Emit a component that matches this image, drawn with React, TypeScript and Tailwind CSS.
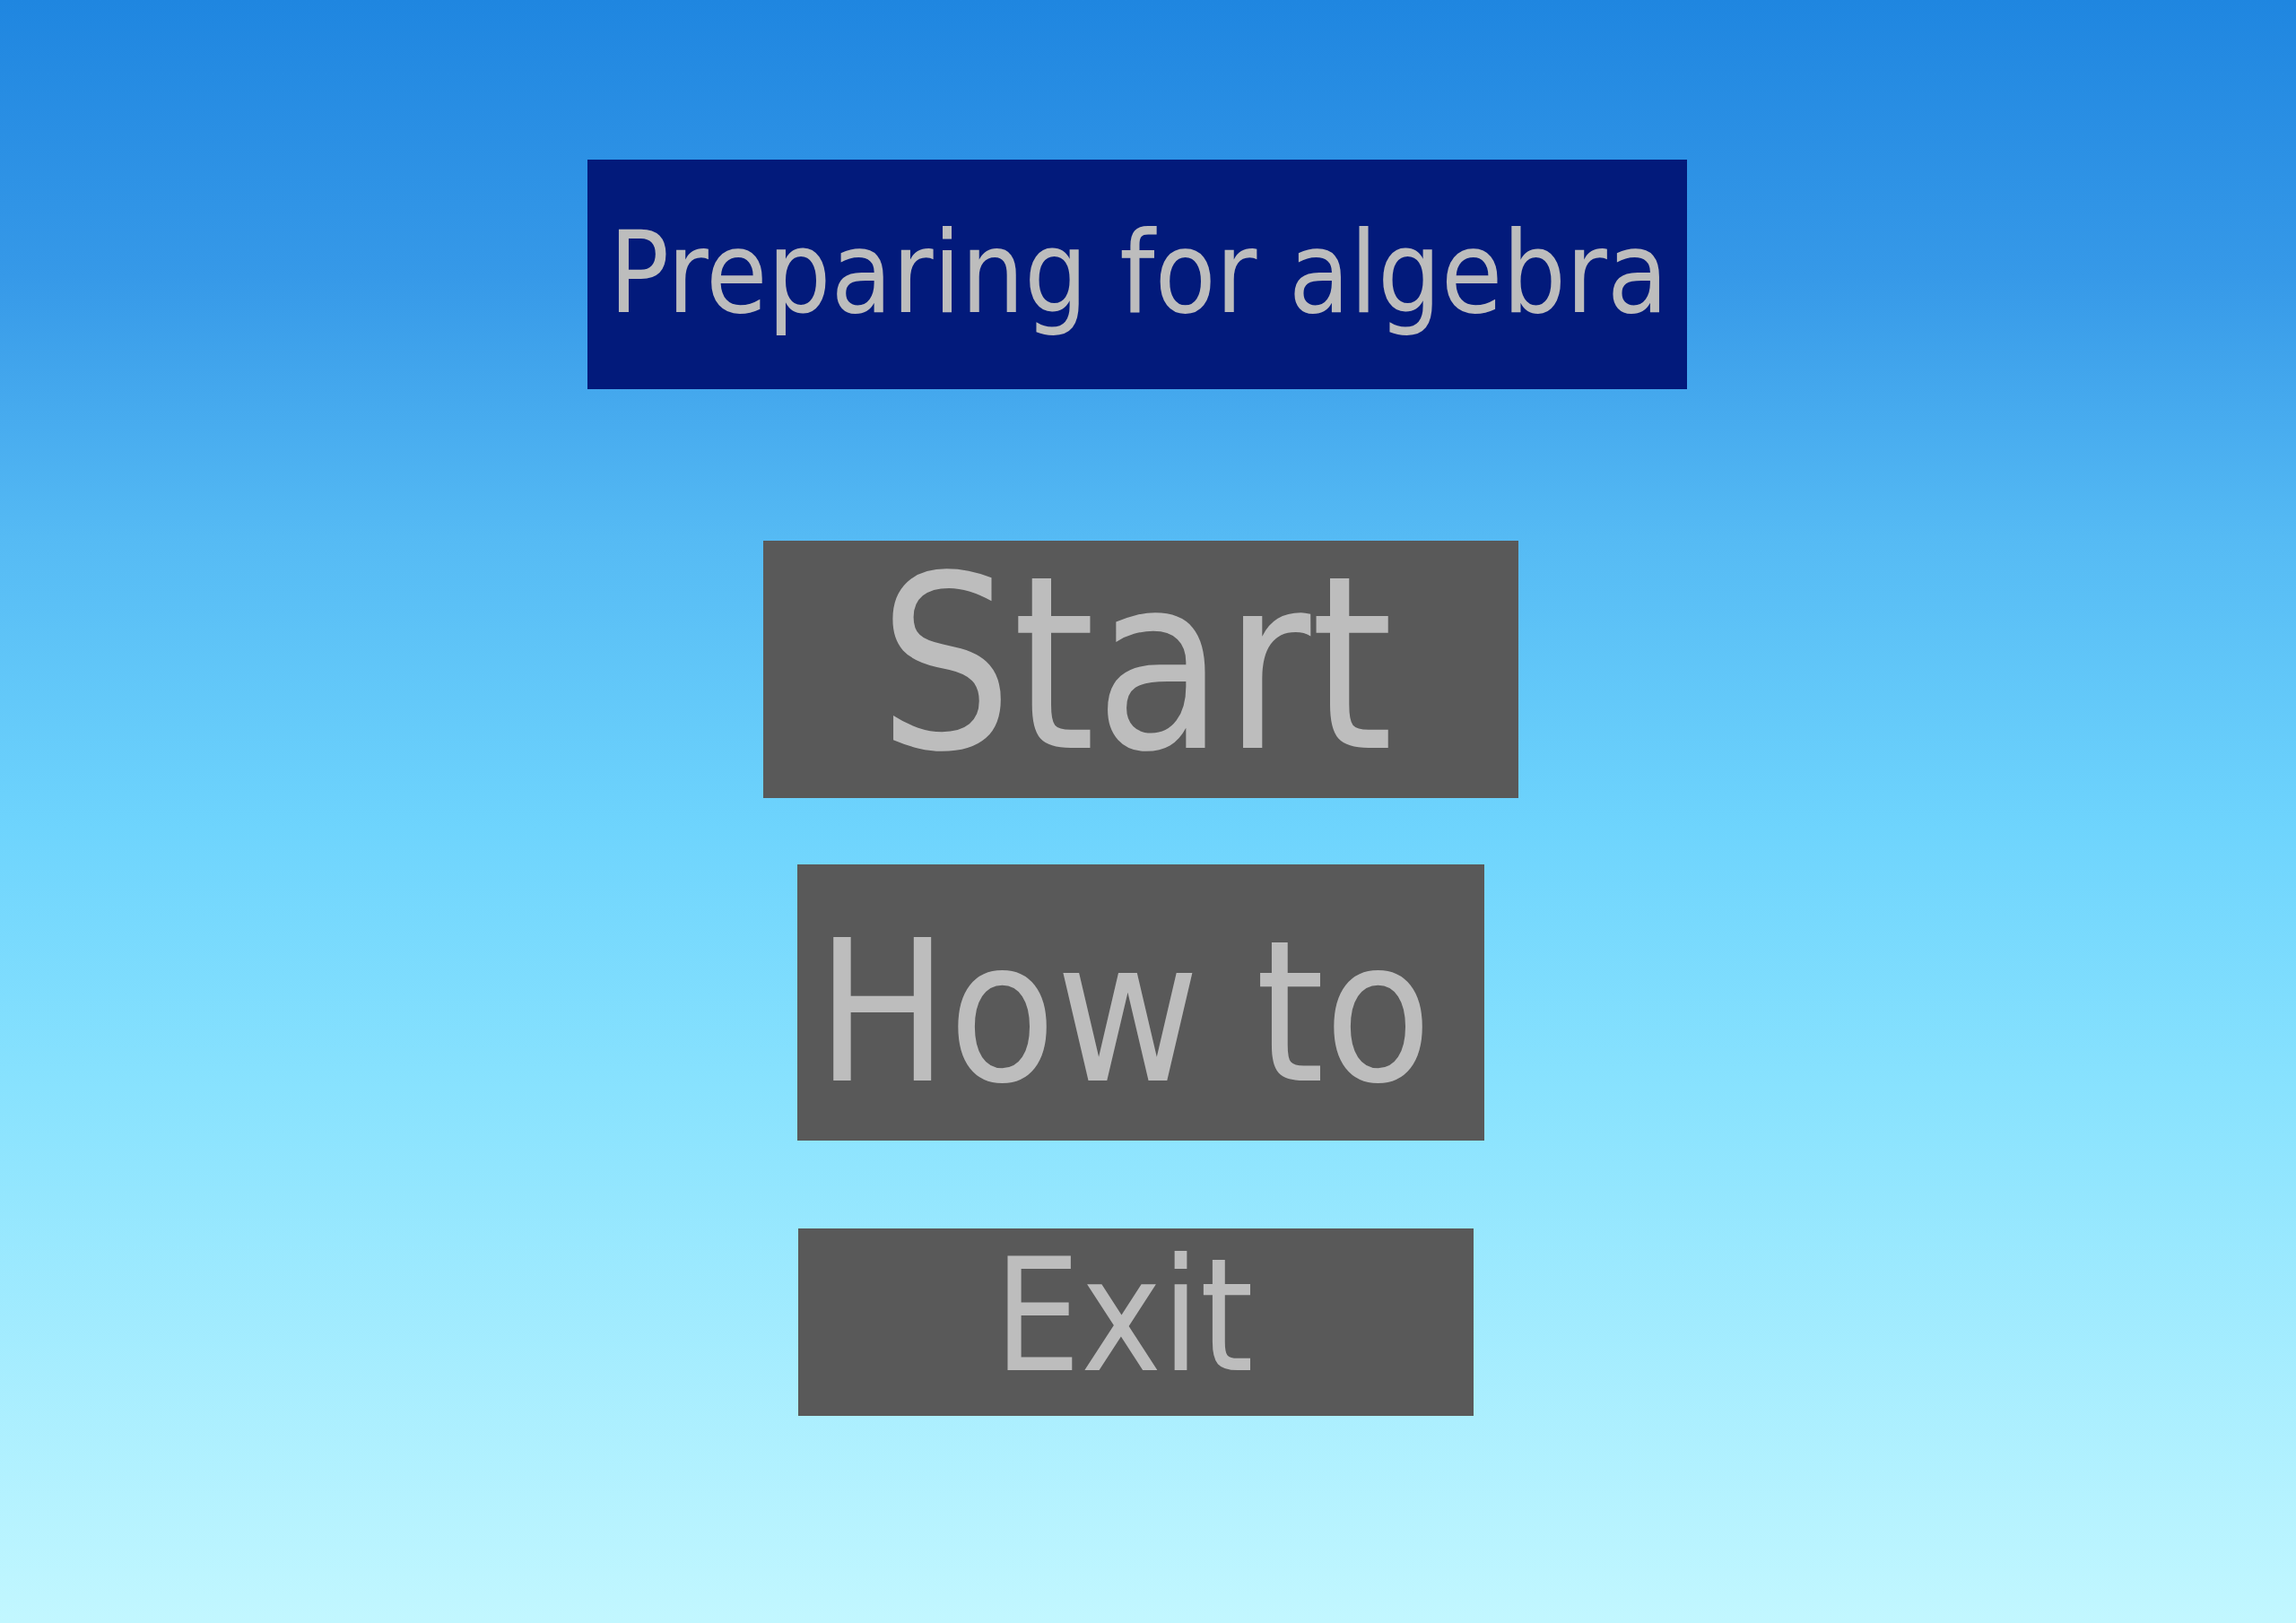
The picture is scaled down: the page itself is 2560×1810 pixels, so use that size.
import React from 'react';

const font = { fontFamily: '"DejaVu Sans Condensed", "DejaVu Sans", sans-serif' };

const MenuButton: React.FC<{ label: string; className: string; textClassName: string }> = ({ label, className, textClassName }) => (
  <button className={`bg-[#595959] flex text-[#bdbdbd] leading-none whitespace-nowrap ${className}`}>
    <span className={`inline-block ${textClassName}`} style={font}>{label}</span>
  </button>
);

export default function App() {
  return (
    <div className="w-[2560px] h-[1810px] overflow-hidden bg-[linear-gradient(to_bottom,#1f86e0_0%,#3699e8_17%,#55baf4_33%,#6ed4fd_51%,#88e2fe_67%,#c2f7ff_100%)]">
      <div className="flex flex-col pt-[178px]">
        <div className="ml-[655px] w-[1226px] h-[256px] bg-[#021a7b] pl-[24px] pt-[64px] text-[#bdbdbd] leading-none whitespace-nowrap">
          <h1 className="text-[126px] font-normal origin-left scale-x-[0.983]" style={font}>Preparing for algebra</h1>
        </div>

        <MenuButton
          label="Start"
          className="ml-[851px] mt-[169px] w-[842px] h-[287px] justify-center pt-[3px] pr-[10px]"
          textClassName="text-[269px] scale-x-[0.97]"
        />
        <MenuButton
          label="How to"
          className="ml-[889px] mt-[74px] w-[766px] h-[308px] justify-start pl-[21px] pt-[55px]"
          textClassName="text-[220px] origin-left scale-x-[0.99]"
        />
        <MenuButton
          label="Exit"
          className="ml-[890px] mt-[98px] w-[753px] h-[209px] justify-center pt-[10px] pr-[26px]"
          textClassName="text-[175px] scale-x-[0.97]"
        />
      </div>
    </div>
  );
}
